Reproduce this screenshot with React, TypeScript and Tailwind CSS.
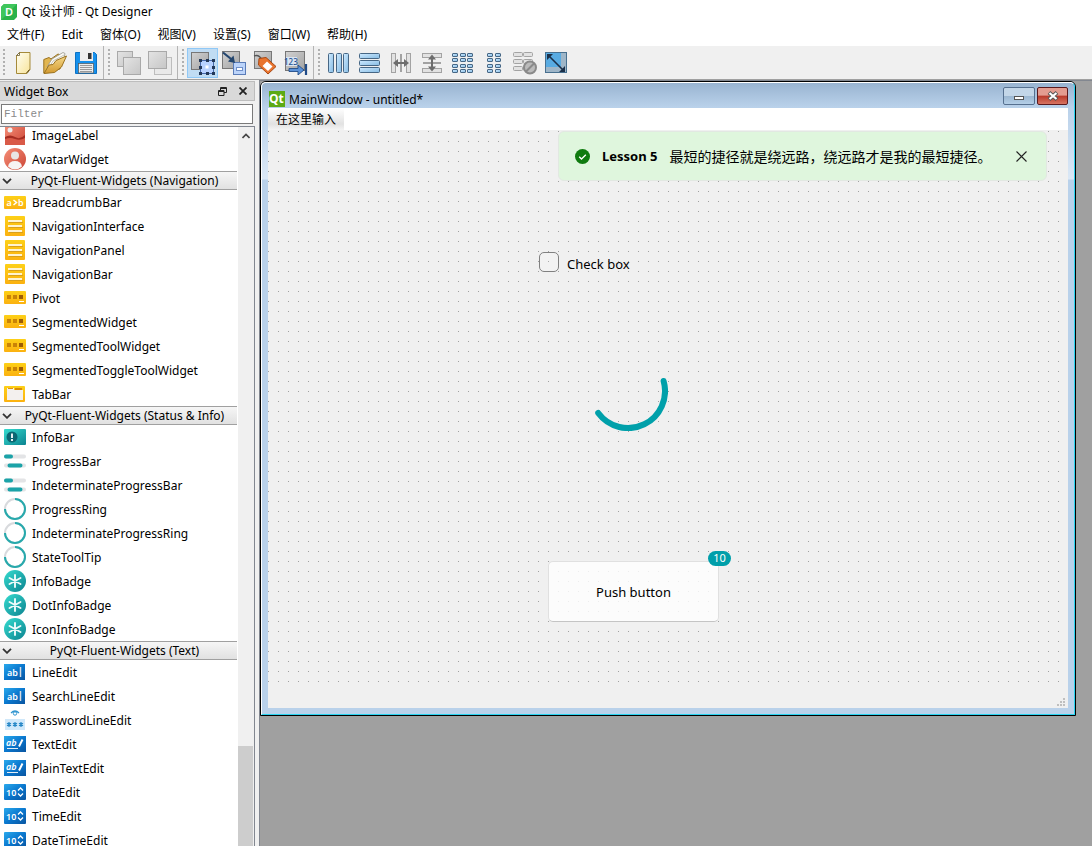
import type { ReactNode } from "react";

const SANS = "font-['Noto_Sans','Noto_Sans_CJK_SC',sans-serif]";

/* ---------- toolbar icons ---------- */

function Tool({ children }: { children: ReactNode }) {
  return (
    <svg viewBox="0 0 24 24" className="w-6 h-6">
      {children}
    </svg>
  );
}

const box = { fill: "url(#grayBox)", stroke: "#777", strokeWidth: 1 };
const faded = { fill: "url(#fadedBox)", stroke: "#a9a9a9", strokeWidth: 1 };
const blue = { fill: "url(#blueBar)", stroke: "#476785", strokeWidth: 1 };
const pale = { fill: "#e2e2e2", stroke: "#a3a3a3", strokeWidth: 1 };

function Gradients() {
  return (
    <svg className="absolute w-0 h-0" aria-hidden="true">
      <defs>
        <linearGradient id="grayBox" x1="0" y1="0" x2="1" y2="1">
          <stop offset="0" stopColor="#d2d2d2" />
          <stop offset="1" stopColor="#a2a2a2" />
        </linearGradient>
        <linearGradient id="fadedBox" x1="0" y1="0" x2="1" y2="1">
          <stop offset="0" stopColor="#e4e4e4" />
          <stop offset="1" stopColor="#c6c6c6" />
        </linearGradient>
        <linearGradient id="blueBar" x1="0" y1="0" x2="1" y2="1">
          <stop offset="0" stopColor="#cfeaff" />
          <stop offset="1" stopColor="#86bce4" />
        </linearGradient>
        <linearGradient id="folder" x1="0" y1="0" x2="0" y2="1">
          <stop offset="0" stopColor="#f5d98a" />
          <stop offset="1" stopColor="#d39a30" />
        </linearGradient>
        <linearGradient id="paper" x1="0" y1="0" x2="1" y2="1">
          <stop offset="0" stopColor="#fffef2" />
          <stop offset="1" stopColor="#f8e49a" />
        </linearGradient>
        <linearGradient id="yellow" x1="0" y1="0" x2="0" y2="1">
          <stop offset="0" stopColor="#fdd017" />
          <stop offset="1" stopColor="#fbb110" />
        </linearGradient>
        <linearGradient id="teal" x1="0" y1="0" x2="1" y2="1">
          <stop offset="0" stopColor="#35dccf" />
          <stop offset="1" stopColor="#0c8390" />
        </linearGradient>
        <linearGradient id="azure" x1="0" y1="0" x2="1" y2="1">
          <stop offset="0" stopColor="#2aa9ec" />
          <stop offset="0.5" stopColor="#0a78cf" />
          <stop offset="1" stopColor="#0a55a0" />
        </linearGradient>
        <linearGradient id="red" x1="0" y1="0" x2="1" y2="1">
          <stop offset="0" stopColor="#f58f78" />
          <stop offset="1" stopColor="#cc4535" />
        </linearGradient>
      </defs>
    </svg>
  );
}

const NewIcon = () => (
  <Tool>
    <path d="M7.5 1.5h10.500l0 17-3 4h-10.500v-18z" fill="url(#paper)" stroke="#a58a3a" />
    <path d="M7.500 1.500v3h-3z" fill="#fff" stroke="#6a5a2a" strokeWidth=".8" />
    <path d="M17.500 18.500l-3 3.500" stroke="#57451a" />
  </Tool>
);

const OpenIcon = () => (
  <Tool>
    <path d="M.8 22V8.500L6 6.500l2 1.500 7-5 5 2-3 13z" fill="#e2b650" stroke="#9a7220" />
    <path d="M4 16l5-8 11-6.500 2 1-2 9z" fill="#fbfbf6" stroke="#98968c" strokeWidth=".8" />
    <path d="M6 17l4-7 11-6" stroke="#c8c6bb" fill="none" />
    <path d="M1 22.500L6 14l4-.5 3-4 10.500-4.500-5 11-7 5.500z" fill="url(#folder)" stroke="#9a7220" />
  </Tool>
);

const SaveIcon = () => (
  <Tool>
    <path d="M1.500 1.500h19l2 2v19h-21z" fill="#1590ec" stroke="#0d72c4" />
    <rect x="6" y="1" width="13" height="9" fill="#eee" />
    <rect x="14" y="2" width="3.500" height="6" fill="#333" />
    <rect x="4.500" y="12.500" width="15" height="9.500" fill="#ececec" stroke="#555" strokeWidth=".7" />
    <path d="M6 14.500h12M6 16.500h12M6 18.500h12M6 20.500h12" stroke="#9a9a9a" />
  </Tool>
);

const SendBackIcon = () => (
  <Tool>
    <rect x=".5" y=".5" width="15" height="15" {...faded} />
    <rect x="6.500" y="6.500" width="17" height="17" {...faded} />
  </Tool>
);

const BringFrontIcon = () => (
  <Tool>
    <rect x="6.500" y="6.500" width="17" height="17" fill="#e9e9e9" stroke="#bdbdbd" />
    <rect x=".5" y=".5" width="18" height="17" {...faded} />
  </Tool>
);

const EditWidgetsIcon = () => (
  <Tool>
    <rect x=".5" y="1.500" width="17" height="17" {...box} />
    <rect x="9.500" y="9.500" width="13" height="13" fill="#b8d2ff" stroke="#4668a8" />
    <rect x="14.500" y="14.500" width="3" height="3" fill="#fff" />
    <g fill="#233858">
      <path d="M8 8h3v3H8zM15 8h3v3h-3zM21 8h3v3h-3zM8 15h3v3H8zM21 15h3v3h-3zM8 21h3v3H8zM15 21h3v3h-3zM21 21h3v3h-3z" />
    </g>
  </Tool>
);

const EditSignalsIcon = () => (
  <Tool>
    <rect x=".5" y=".5" width="17" height="17" {...box} />
    <rect x="11.500" y="11.500" width="12" height="12" fill="#bcd4fa" stroke="#5a7cb8" />
    <rect x="14.500" y="16.500" width="6" height="3" fill="#fff" stroke="#6f8fc8" />
    <path d="M1 1.500l10 8" stroke="#24466e" strokeWidth="2.200" />
    <path d="M13 12l-7-1.500 5.500-6z" fill="#24466e" />
  </Tool>
);

const EditBuddiesIcon = () => (
  <Tool>
    <rect x="1.500" y=".5" width="17" height="17" {...box} />
    <path d="M1 5q5-2 8 4" stroke="#555" fill="none" strokeWidth="1.300" />
    <path d="M6 7.500l7-1 10 9-8 7.500-9.500-9z" fill="#e9742e" stroke="#a84813" />
    <path d="M14 10.500l5.500 5-4.500 4.500-5.500-5z" fill="#fff" />
  </Tool>
);

const TabOrderIcon = () => (
  <Tool>
    <rect x="1.500" y=".5" width="19" height="19" {...box} />
    <rect x="2" y="6" width="11" height="9" fill="#d8e4f2" />
    <text x="0" y="14" fontSize="8" fontWeight="500" fill="#1d4f91" fontFamily="Noto Sans">123</text>
    <path d="M5 17.500h9v-3.500l6 5-6 5v-3.500H5z" fill="#5b92d8" stroke="#214c88" strokeWidth=".9" />
    <path d="M22 13v11" stroke="#214c88" strokeWidth="2.200" />
  </Tool>
);

const HorizontalIcon = () => (
  <Tool>
    {[1.5, 9.5, 16.5].map((x) => (
      <rect key={x} x={x} y="2.500" width="5" height="19" rx="1" {...blue} />
    ))}
  </Tool>
);

const VerticalIcon = () => (
  <Tool>
    {[2.5, 9.5, 16.5].map((y) => (
      <rect key={y} x="1.500" y={y} width="20" height="5" rx="1" {...blue} />
    ))}
  </Tool>
);

const HSplitIcon = () => (
  <Tool>
    <rect x="2.500" y="2.500" width="4" height="19" {...pale} />
    <rect x="17.500" y="2.500" width="4" height="19" {...pale} />
    <path d="M12 3v18" stroke="#888" strokeWidth="1.500" />
    <path d="M4 12l5-4v3h6V8l5 4-5 4v-3H9v3z" fill="#6d6d6d" />
  </Tool>
);

const VSplitIcon = () => (
  <Tool>
    <rect x="2.500" y="2.500" width="19" height="4" {...pale} />
    <rect x="2.500" y="17.500" width="19" height="4" {...pale} />
    <path d="M3 12h18" stroke="#888" strokeWidth="1.500" />
    <path d="M12 3.500l4 5h-3v7h3l-4 5-4-5h3v-7H8z" fill="#6d6d6d" />
  </Tool>
);

const GridIcon = () => (
  <Tool>
    {[2.5, 7.5, 13.5, 18.5].map((y) =>
      [1.5, 9.5, 16.5].map((x) => <rect key={`${x}-${y}`} x={x} y={y} width="5" height="3" rx=".5" {...blue} />)
    )}
  </Tool>
);

const FormIcon = () => (
  <Tool>
    {[2.5, 7.5, 13.5, 18.5].map((y) =>
      [5.5, 13.5].map((x) => <rect key={`${x}-${y}`} x={x} y={y} width="5" height="3" rx=".5" {...blue} />)
    )}
  </Tool>
);

const BreakIcon = () => (
  <Tool>
    {[1.5, 8.5, 15.5].map((y) => (
      <g key={y}>
        <rect x=".5" y={y} width="9" height="4" rx="1" {...pale} />
        <rect x="10.500" y={y} width="9" height="4" rx="1" {...pale} />
      </g>
    ))}
    <circle cx="17" cy="16.500" r="6" fill="#bbb" stroke="#8a8a8a" strokeWidth="2" />
    <path d="M13 20.500l8-8" stroke="#8a8a8a" strokeWidth="2" />
  </Tool>
);

const AdjustIcon = () => (
  <Tool>
    <rect x="1.500" y="1.500" width="21" height="20" fill="#9fb6c8" stroke="#48708f" />
    <rect x="2" y="2" width="15" height="14" fill="#58abe2" />
    <path d="M4 4l15 15" stroke="#1b3049" strokeWidth="1.600" />
    <path d="M3 3h6l-6 6zM21 21h-6l6-6z" fill="#1b3049" />
  </Tool>
);

interface Action {
  label: string;
  icon: ReactNode;
  active?: boolean;
}

const TOOLBARS: Action[][] = [
  [
    { label: "New", icon: <NewIcon /> },
    { label: "Open", icon: <OpenIcon /> },
    { label: "Save", icon: <SaveIcon /> },
  ],
  [
    { label: "Send to Back", icon: <SendBackIcon /> },
    { label: "Bring to Front", icon: <BringFrontIcon /> },
  ],
  [
    { label: "Edit Widgets", icon: <EditWidgetsIcon />, active: true },
    { label: "Edit Signals/Slots", icon: <EditSignalsIcon /> },
    { label: "Edit Buddies", icon: <EditBuddiesIcon /> },
    { label: "Edit Tab Order", icon: <TabOrderIcon /> },
  ],
  [
    { label: "Lay Out Horizontally", icon: <HorizontalIcon /> },
    { label: "Lay Out Vertically", icon: <VerticalIcon /> },
    { label: "Horizontal Splitter", icon: <HSplitIcon /> },
    { label: "Vertical Splitter", icon: <VSplitIcon /> },
    { label: "Lay Out in a Grid", icon: <GridIcon /> },
    { label: "Lay Out in a Form", icon: <FormIcon /> },
    { label: "Break Layout", icon: <BreakIcon /> },
    { label: "Adjust Size", icon: <AdjustIcon /> },
  ],
];

/* ---------- widget box icons ---------- */

type IconKind =
  | "image" | "avatar" | "breadcrumb" | "nav" | "pivot" | "tab" | "info" | "progress"
  | "ring" | "badge" | "line" | "password" | "text" | "spin";

function WidgetIcon({ kind }: { kind: IconKind }) {
  return (
    <svg viewBox="0 0 22 22" className="w-[22px] h-[22px] shrink-0">
      {kind === "image" && (
        <>
          <rect x="1" y="1" width="20" height="20" fill="url(#red)" />
          <circle cx="6" cy="6" r="2.500" fill="#eee" />
          <path d="M1 14q5-4 10-1t10-2v10H1z" fill="#d95a48" />
          <path d="M1 13q5-3 10 0t10-2v3q-5 3-10 1T1 15z" fill="#a52d22" />
        </>
      )}
      {kind === "avatar" && (
        <>
          <circle cx="11" cy="11" r="11" fill="url(#red)" />
          <circle cx="11" cy="7.500" r="4" fill="#e8e6e6" />
          <path d="M4 18.500q1-5.500 7-5.500t7 5.500q-7 6-14 0z" fill="#f6f3f3" />
        </>
      )}
      {kind === "breadcrumb" && (
        <>
          <rect x="0" y="5" width="22" height="13" rx="1" fill="url(#yellow)" />
          <text x="2.500" y="15" fontSize="9" fontWeight="600" fill="#fff" fontFamily="Noto Sans">a</text>
          <path d="M9.500 9l3 2.500-3 2.500" stroke="#fff" strokeWidth="1.500" fill="none" />
          <text x="14" y="15" fontSize="9" fontWeight="600" fill="#fff" fontFamily="Noto Sans">b</text>
        </>
      )}
      {kind === "nav" && (
        <>
          <rect x="1" y="1" width="20" height="20" rx="1" fill="url(#yellow)" />
          <path d="M5 7.500h14M5 12.500h14M5 17.500h14" stroke="#d9a01c" />
          <path d="M4 6h14M4 11h14M4 16h14" stroke="#fff3d0" strokeWidth="2" />
        </>
      )}
      {kind === "pivot" && (
        <>
          <rect x="0" y="4" width="22" height="13" rx="1" fill="url(#yellow)" />
          <path d="M3 8h4v4H3zM9 8h4v4H9z" fill="#c98306" />
          <path d="M15 8h4v4h-4z" fill="#9c5c05" />
          <path d="M15 14.500h5" stroke="#fff" />
        </>
      )}
      {kind === "tab" && (
        <>
          <rect x="0" y="3" width="21" height="16" rx="1" fill="url(#yellow)" />
          <path d="M11 5h7v3h-7z" fill="#d98c08" />
          <path d="M3 5h7v2h9v10H3z" fill="#f3f0ee" />
          <path d="M4 5.500h5" stroke="#e39410" />
        </>
      )}
      {kind === "info" && (
        <>
          <rect x="0" y="3" width="22" height="16" rx="1" fill="url(#teal)" />
          <circle cx="8" cy="11" r="5.500" fill="#0b6672" />
          <path d="M8 7.500v4.500M8 13v2" stroke="#fff" strokeWidth="1.800" />
        </>
      )}
      {kind === "progress" && (
        <>
          <path d="M2 6.500h18M2 15.500h18" stroke="#e3e4e6" strokeWidth="4" strokeLinecap="round" />
          <path d="M2 6.500h5M5.500 15.500h11" stroke="#1ba3a8" strokeWidth="4" strokeLinecap="round" />
        </>
      )}
      {kind === "ring" && (
        <>
          <circle cx="11" cy="11" r="10" fill="none" stroke="#d8dadd" strokeWidth="2" />
          <path d="M11 1a10 10 0 1 1-10 10" fill="none" stroke="#27a9ac" strokeWidth="2" />
        </>
      )}
      {kind === "badge" && (
        <>
          <circle cx="11" cy="11" r="11" fill="url(#teal)" />
          <path d="M11 5v12M5.500 8l11 6M5.500 14l11-6" stroke="#eefafa" strokeWidth="1.900" strokeLinecap="round" />
        </>
      )}
      {kind === "line" && (
        <>
          <rect x="0" y="3" width="21" height="16" fill="url(#azure)" />
          <text x="3" y="14.500" fontSize="9" fontWeight="600" fill="#fff" fontFamily="Noto Sans">ab</text>
          <path d="M16.500 6v10" stroke="#d5dbe2" strokeWidth="1.500" />
        </>
      )}
      {kind === "password" && (
        <>
          <rect x="1" y="10" width="20" height="11" fill="#cfe8fa" />
          <path d="M7 4q4-4 8 0" fill="none" stroke="#2f94cf" strokeWidth="1.200" />
          <circle cx="11" cy="4.500" r="1.700" fill="none" stroke="#2f94cf" />
          {[5, 11, 17].map((x) => (
            <path key={x} d={`M${x} 13v5M${x - 2} 14.300l4 2.500M${x - 2} 16.800l4-2.500`} stroke="#2486c6" strokeWidth="1.200" />
          ))}
        </>
      )}
      {kind === "text" && (
        <>
          <rect x="0" y="3" width="22" height="16" fill="url(#azure)" />
          <text x="2" y="13" fontSize="9" fontWeight="600" fontStyle="italic" fill="#fff" fontFamily="Noto Sans">ab</text>
          <path d="M3 15.500h11" stroke="#e4edf5" />
          <path d="M15 13.500l3.500-7" stroke="#fff" strokeWidth="2" />
        </>
      )}
      {kind === "spin" && (
        <>
          <rect x="0" y="3" width="22" height="16" rx="1" fill="url(#azure)" />
          <text x="2" y="14.500" fontSize="9" fontWeight="600" fill="#fff" fontFamily="Noto Sans">10</text>
          <path d="M14 9.500L16.500 7 19 9.500M14 12.500l2.500 2.500 2.500-2.500" stroke="#fff" strokeWidth="1.300" fill="none" />
        </>
      )}
    </svg>
  );
}

interface Section {
  title?: string;
  items: [string, IconKind][];
}

const SECTIONS: Section[] = [
  { items: [["ImageLabel", "image"], ["AvatarWidget", "avatar"]] },
  {
    title: "PyQt-Fluent-Widgets (Navigation)",
    items: [
      ["BreadcrumbBar", "breadcrumb"],
      ["NavigationInterface", "nav"],
      ["NavigationPanel", "nav"],
      ["NavigationBar", "nav"],
      ["Pivot", "pivot"],
      ["SegmentedWidget", "pivot"],
      ["SegmentedToolWidget", "pivot"],
      ["SegmentedToggleToolWidget", "pivot"],
      ["TabBar", "tab"],
    ],
  },
  {
    title: "PyQt-Fluent-Widgets (Status & Info)",
    items: [
      ["InfoBar", "info"],
      ["ProgressBar", "progress"],
      ["IndeterminateProgressBar", "progress"],
      ["ProgressRing", "ring"],
      ["IndeterminateProgressRing", "ring"],
      ["StateToolTip", "ring"],
      ["InfoBadge", "badge"],
      ["DotInfoBadge", "badge"],
      ["IconInfoBadge", "badge"],
    ],
  },
  {
    title: "PyQt-Fluent-Widgets (Text)",
    items: [
      ["LineEdit", "line"],
      ["SearchLineEdit", "line"],
      ["PasswordLineEdit", "password"],
      ["TextEdit", "text"],
      ["PlainTextEdit", "text"],
      ["DateEdit", "spin"],
      ["TimeEdit", "spin"],
      ["DateTimeEdit", "spin"],
    ],
  },
];

const MENUS = ["文件(F)", "Edit", "窗体(O)", "视图(V)", "设置(S)", "窗口(W)", "帮助(H)"];

function Header() {
  return (
    <header className="shrink-0 bg-white">
      <div className="flex items-center h-6 gap-1 pl-px">
        <svg viewBox="0 0 16 16" className="w-4 h-4">
          <path d="M3 0h13v13l-3 3H0V3z" fill="#2bb24a" />
          <path d="M3 0h13L0 16V3z" fill="#3fc65c" />
          <text x="4" y="12" fontSize="11" fontWeight="600" fill="#fff" fontFamily="Noto Sans">D</text>
        </svg>
        <h1 className="pl-px">Qt 设计师 - Qt Designer</h1>
      </div>
      <nav className="flex items-center gap-[17px] h-[22px] pl-[7px]">
        {MENUS.map((m) => (
          <button key={m} type="button">{m}</button>
        ))}
      </nav>
    </header>
  );
}

function Toolbar() {
  return (
    <div className="flex shrink-0 h-[34px] bg-[#f0f0f0] border-b border-[#a0a0a0]">
      {TOOLBARS.map((group, i) => (
        <div
          key={i}
          className={`flex items-center pr-0.5 ${i === 0 ? "pl-2" : "pl-[9px]"} ${i < TOOLBARS.length - 1 ? "border-r border-[#b4b4b4]" : ""}`}
        >
          <div className="w-0.5 h-7 -ml-[5px] mr-[3px] bg-[repeating-linear-gradient(#b0b0b0_0_2px,transparent_2px_4px)]" />
          {group.map((a) => (
            <button
              key={a.label} type="button" aria-label={a.label}
              className={`w-[31px] h-[30px] flex items-center justify-center border ${
                a.active ? "bg-[#c0dcf3] border-[#90c8f6]" : "border-transparent"
              }`}
            >
              {a.icon}
            </button>
          ))}
        </div>
      ))}
    </div>
  );
}

function WidgetBox() {
  return (
    <aside className="flex flex-col shrink-0 w-[255px] bg-[#f0f0f0] pt-px">
      <div className="flex items-center h-5 pl-1 pr-[7px] bg-[#d9d9d9] border border-[#bdbdbd] border-l-0">
        <h2 className="flex-1 pt-0.5">Widget Box</h2>
        <button type="button" aria-label="Float" className="mr-3">
          <svg viewBox="0 0 9 9" className="w-[9px] h-[9px]" fill="none" stroke="#222">
            <path d="M2.500 3V.5h6v5H6M2.500 1.500h6" />
            <path d="M.5 3.500h5.500v5H.5zM.5 4.500H6" />
          </svg>
        </button>
        <button type="button" aria-label="Close">
          <svg viewBox="0 0 8 8" className="w-2 h-2" stroke="#222" strokeWidth="1.800">
            <path d="M.5.5l7 7M7.500.5l-7 7" />
          </svg>
        </button>
      </div>

      <input
        type="text" placeholder="Filter" aria-label="Filter"
        className="shrink-0 h-5 mt-[3px] mb-0.5 ml-px mr-0.5 pl-0.5 bg-white border border-[#7a7a7a] font-['Liberation_Mono',monospace] text-[11px] placeholder:text-[#8a8a8a] outline-none"
      />

      <div className="flex flex-1 min-h-0 bg-white border-t border-r border-[#828790]">
        <div className="flex-1 overflow-hidden">
          <div className="-mt-1 mr-px">
            {SECTIONS.map((s, i) => (
              <section key={i}>
                {s.title && (
                  <h3 className="flex items-center h-[19px] bg-linear-to-b from-[#f6f6f6] to-[#e1e1e1] border-y border-[#a0a0a0]">
                    <svg viewBox="0 0 10 6" className="w-[10px] h-[6px] ml-0.5 shrink-0" fill="none" stroke="#333" strokeWidth="1.800">
                      <path d="M1 .8l4 4 4-4" />
                    </svg>
                    <span className="flex-1 text-center whitespace-nowrap">{s.title}</span>
                  </h3>
                )}
                <ul>
                  {s.items.map(([name, kind]) => (
                    <li key={name} className="flex items-center gap-1.5 h-6 pl-1">
                      <WidgetIcon kind={kind} />
                      <span className="pt-0.5 leading-3">{name}</span>
                    </li>
                  ))}
                </ul>
              </section>
            ))}
          </div>
        </div>
        {/* Scrollbar */}
        <div className="flex flex-col w-4 bg-[#f0f0f0]">
          <div className="flex items-center justify-center h-[18px] shrink-0">
            <svg viewBox="0 0 8 6" className="w-2 h-1.5" fill="none" stroke="#444" strokeWidth="1.600">
              <path d="M.5 5L4 1.500 7.500 5" />
            </svg>
          </div>
          <div className="grow-6" />
          <div className="grow mr-px bg-[#cdcdcd]" />
        </div>
      </div>
    </aside>
  );
}

function FormCanvas() {
  return (
    <div className="relative h-[578px] bg-[#f0f0f0]">
      <div className="h-[556px] pt-px">
        <div className="h-full bg-[linear-gradient(90deg,#f0f0f0_0_9px,transparent_9px),linear-gradient(#a0a0a0_0_1px,#f0f0f0_1px)] bg-[length:10px_10px] bg-[position:1px_0,0_0]" />
      </div>

      {/* Info bar */}
      <div role="status" className="absolute left-[290px] top-px w-[489px] h-[50px] flex items-center pl-4 pr-[19px] bg-[#dff6dd] border border-[#e2e8e2] rounded-md text-sm">
        <svg viewBox="0 0 15 15" className="w-[15px] h-[15px] mr-3 shrink-0">
          <circle cx="7.500" cy="7.500" r="7.500" fill="#0f7b0f" />
          <path d="M4.200 7.700l2.300 2.300 4.300-4.300" fill="none" stroke="#fff" strokeWidth="1.300" />
        </svg>
        <strong className="mr-3 text-[13px]">Lesson 5</strong>
        <span className="flex-1 pt-0.5 whitespace-nowrap">最短的捷径就是绕远路，绕远路才是我的最短捷径。</span>
        <button type="button" aria-label="Dismiss">
          <svg viewBox="0 0 11 11" className="w-[11px] h-[11px]" stroke="#222" strokeWidth="1.100">
            <path d="M.5.5l10 10M10.500.5l-10 10" />
          </svg>
        </button>
      </div>

      {/* Check box */}
      <label className="absolute left-[271px] top-[122px] flex items-center gap-2 text-[13px]">
        <input type="checkbox" className="appearance-none w-5 h-5 border border-[#808080] rounded-[5px] bg-white/10" />
        <span className="pt-1 leading-4">Check box</span>
      </label>

      {/* Progress ring */}
      <svg viewBox="0 0 80 80" className="absolute left-[320px] top-[221px] w-20 h-20">
        <path d="M75.600 30A37 37 0 0 1 10.200 62" fill="none" stroke="#00a0aa" strokeWidth="6" strokeLinecap="round" />
      </svg>

      <button type="button" className="absolute left-[280px] top-[431px] w-[171px] h-[61px] pt-0.5 bg-white/80 border border-[#e0e0e0] border-b-[#c4c4c4] rounded-[5px] text-[13px]">
        Push button
      </button>
      <span className="absolute left-[440px] top-[421px] w-[23px] h-[15px] flex items-center justify-center rounded-full bg-[#009faa] text-white text-[11px]">
        10
      </span>

      {/* Size grip */}
      <svg viewBox="0 0 8 8" className="absolute right-[3px] bottom-0.5 w-2 h-2" fill="#bfbfbf">
        <path d="M6 0h2v2H6zM3 3h2v2H3zM6 3h2v2H6zM0 6h2v2H0zM3 6h2v2H3zM6 6h2v2H6z" />
      </svg>
    </div>
  );
}

function DesignWindow() {
  return (
    <div className="absolute left-0 top-0 w-[816px] rounded-t-md border border-black bg-[#b9d1ea]">
      <div className="rounded-t-[5px] border border-t-white border-l-white border-r-[#29d3f0] border-b-[#29d3f0] bg-[linear-gradient(#99b4d1,#b9d1ea_24px,#dbe8f6_96px,#b9d1ea_97px)] px-1.5 pb-1.5">
        <div className="flex items-center h-[25px] gap-1 pl-px">
          <svg viewBox="0 0 16 16" className="w-4 h-4 mt-1.5">
            <rect width="16" height="16" fill="#5caa15" />
            <text x="0" y="12" fontSize="12" fontWeight="700" fill="#fff" fontFamily="Open Sans">Qt</text>
          </svg>
          <h2 className="flex-1 pt-2">MainWindow - untitled*</h2>
          <button type="button" aria-label="Minimize" className="w-8 h-[18px] flex items-end justify-center pb-1 bg-[linear-gradient(#c3d6e8_50%,#9bb6d0_50%,#b4cfe8)] border border-[#56708f] rounded-xs">
            <span className="w-2.5 h-1 bg-white border border-[#555]" />
          </button>
          <button type="button" aria-label="Close" className="w-[31px] h-[18px] flex items-center justify-center bg-[linear-gradient(#e39c90_45%,#b8392a_50%,#d77462)] border border-[#5b1a1e] rounded-xs -ml-0.5">
            <svg viewBox="0 0 12 10" className="w-3 h-2.5" fill="none">
              <path d="M2 1.500l8 7M10 1.500l-8 7" stroke="#555" strokeWidth="4" />
              <path d="M2.500 2l7 6M9.500 2l-7 6" stroke="#fff" strokeWidth="2.200" />
            </svg>
          </button>
        </div>
        <div className="flex h-[22px] bg-white">
          <button type="button" className="w-[76px] pt-0.5 bg-[linear-gradient(#fff,#e2e2e2_16px,#f4f4f4)]">在这里输入</button>
        </div>
        <FormCanvas />
      </div>
    </div>
  );
}

export default function App() {
  return (
    <div className={`relative flex flex-col h-screen overflow-hidden bg-[#f0f0f0] text-black text-xs ${SANS}`}>
      <Gradients />
      <Header />
      <Toolbar />
      <div className="flex flex-1 min-h-0">
        <WidgetBox />
        <main className="flex-1 ml-1 bg-[#a0a0a0] border-t border-l border-[#828790]">
          <div className="relative">
            <DesignWindow />
          </div>
        </main>
      </div>
    </div>
  );
}
